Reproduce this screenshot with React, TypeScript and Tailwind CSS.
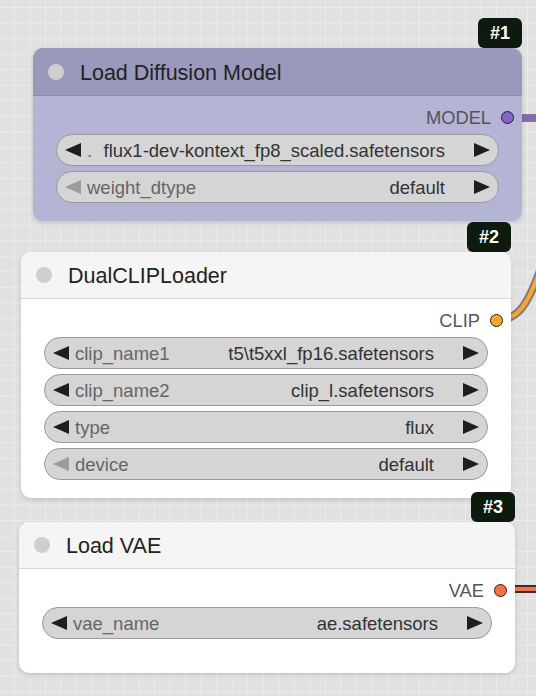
import React from "react";

type Widget = { label: string; value: string; disabled?: boolean };

function Arrow({ dir, color }: { dir: "l" | "r"; color: string }) {
  return (
    <svg width="16" height="14" viewBox="0 0 16 14" className="shrink-0">
      <polygon points={dir === "l" ? "0,7 16,0 16,14" : "0,0 16,7 0,14"} fill={color} />
    </svg>
  );
}

function WidgetRow({ w }: { w: Widget }) {
  return (
    <div className="flex h-[32px] items-center rounded-full border-[1.5px] border-[#9a9a9a] bg-[#d5d5d5] px-[8px] text-[18.5px] leading-none">
      <Arrow dir="l" color={w.disabled ? "#9c9c9c" : "#1e1e1e"} />
      <span className="ml-[6px] translate-y-[1px] whitespace-nowrap text-[#666666]">{w.label}</span>
      <span className="flex-1" />
      <span className="translate-y-[1px] whitespace-nowrap text-[#333333]">{w.value}</span>
      <span className="ml-[29px]">
        <Arrow dir="r" color="#1e1e1e" />
      </span>
    </div>
  );
}

function Node({
  pos,
  title,
  badge,
  headerCls,
  bodyCls,
  output,
  dotCls,
  widgets,
}: {
  pos: string;
  title: string;
  badge: string;
  headerCls: string;
  bodyCls: string;
  output: string;
  dotCls: string;
  widgets: Widget[];
}) {
  return (
    <div className={`absolute flex flex-col rounded-[10px] shadow-[0_2px_5px_rgba(0,0,0,0.14)] ${pos} ${bodyCls}`}>
      <div className="absolute bottom-full right-0 flex h-[30px] w-[44px] items-center justify-center rounded-[6px] bg-[#0c1b0d] text-[18px] font-bold text-white">
        {badge}
      </div>
      <div className={`flex shrink-0 items-center rounded-t-[10px] border-b-[1.5px] pl-[15px] ${headerCls}`}>
        <div className="h-[16px] w-[16px] rounded-full bg-[#cfcfcf]" />
        <span className="ml-[16px] translate-y-[1.5px] text-[21.5px] leading-none text-[#222222]">{title}</span>
      </div>
      <div className="flex flex-col px-[23px]">
        <div className="mb-[8px] mr-[-15px] mt-[12px] flex h-[18px] items-center justify-end">
          <span className="translate-y-[1px] text-[18.3px] leading-none text-[#555555]">{output}</span>
          <div className={`ml-[10px] h-[13px] w-[13px] rounded-full border-[1.5px] border-[#222222] ${dotCls}`} />
        </div>
        <div className="flex flex-col gap-[5px]">
          {widgets.map((w, i) => (
            <WidgetRow key={i} w={w} />
          ))}
        </div>
      </div>
    </div>
  );
}

export default function App() {
  return (
    <div
      className="relative h-[696px] w-[536px] overflow-hidden bg-[#e1e1e1] bg-[linear-gradient(90deg,#ebebeb_1px,transparent_1px),linear-gradient(180deg,#ebebeb_1px,transparent_1px)] bg-[length:15.55px_15.55px] bg-[position:14px_7px]"
      style={{ fontFamily: '"Liberation Sans", Arial, sans-serif' }}
    >
      <svg className="absolute left-0 top-0" width="536" height="696">
        <path d="M 508 118 L 540 118" stroke="#7d7d7d" strokeWidth="8" fill="none" />
        <path d="M 508 118 L 540 118" stroke="#8a5fd0" strokeWidth="4" fill="none" />
        <path d="M 497 320 C 518 320, 528 306, 543 262" stroke="#7d7d7d" strokeWidth="8" fill="none" />
        <path d="M 497 320 C 518 320, 528 306, 543 262" stroke="#ffa52a" strokeWidth="4" fill="none" />
        <path d="M 501 589 L 540 589" stroke="#333333" strokeWidth="8" fill="none" />
        <path d="M 501 589 L 540 589" stroke="#ff7040" strokeWidth="4" fill="none" />
      </svg>

      <Node
        pos="left-[33px] top-[48px] w-[489px] h-[173px] [&>div:nth-child(2)]:h-[48px]"
        title="Load Diffusion Model"
        badge="#1"
        headerCls="h-[48px] bg-[#9999bb] border-[#8a8aaa]"
        bodyCls="bg-[#b4b4d4]"
        output="MODEL"
        dotCls="bg-[#8a5fd0]"
        widgets={[
          { label: ".", value: "flux1-dev-kontext_fp8_scaled.safetensors" },
          { label: "weight_dtype", value: "default", disabled: true },
        ]}
      />
      <Node
        pos="left-[21px] top-[252px] w-[490px] h-[246px]"
        title="DualCLIPLoader"
        badge="#2"
        headerCls="h-[47px] bg-[#f5f5f5] border-[#d6d6d6]"
        bodyCls="bg-white"
        output="CLIP"
        dotCls="bg-[#ffa52a]"
        widgets={[
          { label: "clip_name1", value: "t5\\t5xxl_fp16.safetensors" },
          { label: "clip_name2", value: "clip_l.safetensors" },
          { label: "type", value: "flux" },
          { label: "device", value: "default", disabled: true },
        ]}
      />
      <Node
        pos="left-[19px] top-[522px] w-[496px] h-[151px]"
        title="Load VAE"
        badge="#3"
        headerCls="h-[47px] bg-[#f5f5f5] border-[#d6d6d6]"
        bodyCls="bg-white"
        output="VAE"
        dotCls="bg-[#ff7040]"
        widgets={[{ label: "vae_name", value: "ae.safetensors" }]}
      />
    </div>
  );
}
